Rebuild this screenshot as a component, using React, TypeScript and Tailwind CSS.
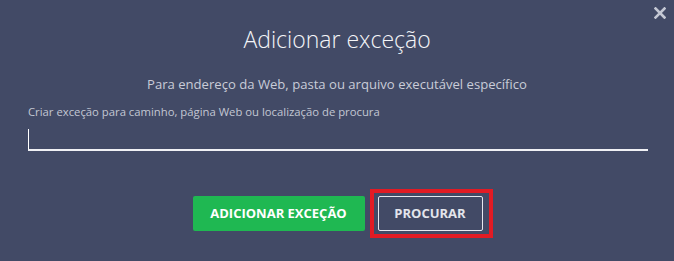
import React from "react";

export default function App() {
  return (
    <div className="relative w-[674px] h-[261px] overflow-hidden bg-[#424a66] font-['Open_Sans',_'Liberation_Sans',_sans-serif] text-white">
      <button className="absolute right-[8px] top-[7px] text-[#c4c8d4]" aria-label="Fechar">
        <svg width="12" height="12" viewBox="0 0 12 12">
          <path d="M1.5 1.5 L10.5 10.5 M10.5 1.5 L1.5 10.5" stroke="currentColor" strokeWidth="2.6" strokeLinecap="square" />
        </svg>
      </button>
      <div className="flex flex-col">
        <h1 className="pt-[25px] text-center text-[23px] leading-[28px] font-light text-[#f4f5f8]">Adicionar exceção</h1>
        <p className="mt-[23px] text-center text-[13.1px] leading-[16px] text-[#c9ccd8]">
          Para endereço da Web, pasta ou arquivo executável específico
        </p>
        <div className="mt-[13px] pl-[28px] pr-[26px]">
          <label className="block text-[11.3px] leading-[14px] text-[#c3c7d3]">
            Criar exceção para caminho, página Web ou localização de procura
          </label>
          <div className="mt-[3px] h-[29px] border-b-2 border-[#f0f1f5] pt-[7px]">
            <div className="h-[20px] w-px bg-white" />
          </div>
        </div>
        <div className="mt-[38px] flex justify-center items-center gap-[5px] pl-[11px]">
          <button className="h-[35px] w-[172px] rounded-[2px] bg-[#1fb852] text-[13px] font-bold text-white">
            ADICIONAR EXCEÇÃO
          </button>
          <div className="border-4 border-[#e21b24] py-[3px] pl-[4px] pr-[6px]">
            <button className="h-[35px] w-[105px] rounded-[2px] border border-[#e6e8ef] text-[13px] font-bold text-[#e3e5ec]">
              PROCURAR
            </button>
          </div>
        </div>
      </div>
    </div>
  );
}
